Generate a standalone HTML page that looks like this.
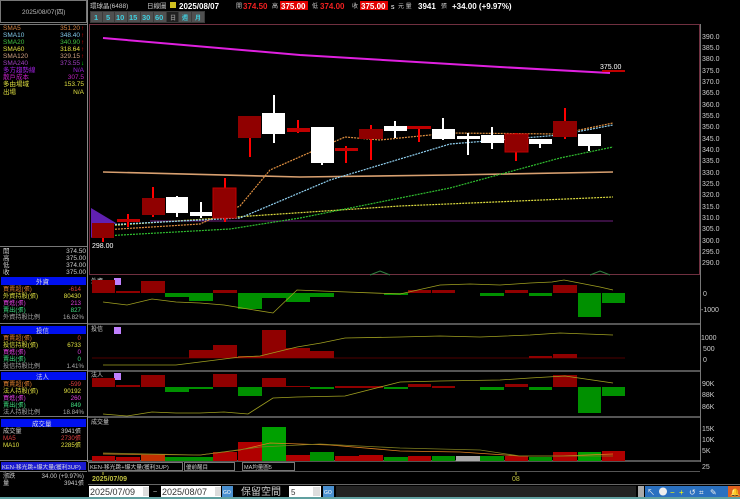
<!DOCTYPE html>
<html><head><meta charset="utf-8"><style>
html,body{margin:0;padding:0;background:#000;width:740px;height:499px;overflow:hidden}
svg text{font-family:"Liberation Sans","Noto Sans CJK TC",sans-serif}
</style></head><body>
<svg width="740" height="499" viewBox="0 0 740 499" xmlns="http://www.w3.org/2000/svg" font-size="7">
<rect width="740" height="499" fill="#000"/>
<rect x="0.5" y="0.5" width="86" height="22" fill="none" stroke="#777"/>
<line x1="87.5" y1="0" x2="87.5" y2="462" stroke="#888"/>
<line x1="0" y1="24.5" x2="87" y2="24.5" stroke="#777"/>
<text x="22" y="14" fill="#bbb" font-size="6.5">2025/08/07(四)</text>
<g font-size="6.5">
<text x="3" y="30" fill="#d08040">SMA5</text><text x="80" y="30" fill="#d08040" text-anchor="end">351.20</text>
<text x="3" y="37" fill="#80c8e8">SMA10</text><text x="80" y="37" fill="#80c8e8" text-anchor="end">348.40</text>
<text x="3" y="44" fill="#40c040">SMA20</text><text x="80" y="44" fill="#40c040" text-anchor="end">340.90</text>
<text x="3" y="51" fill="#e0e040">SMA60</text><text x="80" y="51" fill="#e0e040" text-anchor="end">318.64</text>
<text x="3" y="58" fill="#d0a080">SMA120</text><text x="80" y="58" fill="#d0a080" text-anchor="end">329.15</text>
<text x="3" y="65" fill="#a040c0">SMA240</text><text x="80" y="65" fill="#a040c0" text-anchor="end">373.55</text>
<text x="3" y="72" fill="#a020e0">多方趨勢線</text><text x="84" y="72" fill="#a020e0" text-anchor="end">N/A</text>
<text x="3" y="79" fill="#c020c0">散戶成本</text><text x="84" y="79" fill="#c020c0" text-anchor="end">307.5</text>
<text x="3" y="86" fill="#e0e040">多由場域</text><text x="84" y="86" fill="#e0e040" text-anchor="end">153.75</text>
<text x="3" y="94" fill="#e0e040">出場</text><text x="84" y="94" fill="#e0e040" text-anchor="end">N/A</text>
</g>
<g fill="#f00" font-size="6"><text x="81" y="30">↑</text><text x="81" y="37">↑</text><text x="81" y="44">↑</text><text x="81" y="51">↑</text><text x="81" y="58">↑</text></g>
<text x="81" y="65" fill="#0f0" font-size="6">↓</text>
<line x1="0" y1="246.5" x2="87" y2="246.5" stroke="#777"/>
<g font-size="6.5" fill="#ccc">
<text x="3" y="253">開</text><text x="86" y="253" text-anchor="end">374.50</text>
<text x="3" y="260">高</text><text x="86" y="260" text-anchor="end">375.00</text>
<text x="3" y="267">低</text><text x="86" y="267" text-anchor="end">374.00</text>
<text x="3" y="274">收</text><text x="86" y="274" text-anchor="end">375.00</text>
</g>
<g>
<rect x="1" y="277" width="85" height="8" fill="#0010f0"/><text x="36" y="284" fill="#ddd" font-size="6.5">外資</text>
<rect x="1" y="326" width="85" height="8" fill="#0010f0"/><text x="36" y="333" fill="#ddd" font-size="6.5">投信</text>
<rect x="1" y="372" width="85" height="8" fill="#0010f0"/><text x="36" y="379" fill="#ddd" font-size="6.5">法人</text>
<rect x="1" y="419" width="85" height="8" fill="#0010f0"/><text x="32" y="426" fill="#ddd" font-size="6.5">成交量</text>
<rect x="1" y="462" width="85" height="8" fill="#1a1ad0"/><text x="2" y="469" fill="#ddd" font-size="5.8">KEN-移光跳+爆大量(獲利3UP)</text>
</g>
<g stroke="#777"><line x1="0" y1="323.5" x2="87" y2="323.5"/><line x1="0" y1="370.5" x2="87" y2="370.5"/><line x1="0" y1="416.5" x2="87" y2="416.5"/><line x1="0" y1="460.5" x2="87" y2="460.5"/><line x1="0" y1="471.5" x2="87" y2="471.5"/></g>
<g font-size="6.2">
<text x="3" y="291" fill="#e08030">買賣超(張)</text><text x="81" y="291" fill="#e04040" text-anchor="end">-614</text>
<text x="3" y="298" fill="#e0e040">外資持股(張)</text><text x="81" y="298" fill="#e0e040" text-anchor="end">80430</text>
<text x="3" y="305" fill="#e040e0">買進(張)</text><text x="81" y="305" fill="#e040e0" text-anchor="end">213</text>
<text x="3" y="312" fill="#40e080">賣出(張)</text><text x="81" y="312" fill="#40e080" text-anchor="end">827</text>
<text x="3" y="319" fill="#aaa">外資持股比例</text><text x="84" y="319" fill="#aaa" text-anchor="end">16.82%</text>
<text x="3" y="340" fill="#e08030">買賣超(張)</text><text x="81" y="340" fill="#e04040" text-anchor="end">0</text>
<text x="3" y="347" fill="#e0e040">投信持股(張)</text><text x="81" y="347" fill="#e0e040" text-anchor="end">6733</text>
<text x="3" y="354" fill="#e040e0">買進(張)</text><text x="81" y="354" fill="#e040e0" text-anchor="end">0</text>
<text x="3" y="361" fill="#40e080">賣出(張)</text><text x="81" y="361" fill="#40e080" text-anchor="end">0</text>
<text x="3" y="368" fill="#aaa">投信持股比例</text><text x="84" y="368" fill="#aaa" text-anchor="end">1.41%</text>
<text x="3" y="386" fill="#e08030">買賣超(張)</text><text x="81" y="386" fill="#e04040" text-anchor="end">-599</text>
<text x="3" y="393" fill="#e0e040">法人持股(張)</text><text x="81" y="393" fill="#e0e040" text-anchor="end">90192</text>
<text x="3" y="400" fill="#e040e0">買進(張)</text><text x="81" y="400" fill="#e040e0" text-anchor="end">260</text>
<text x="3" y="407" fill="#40e080">賣出(張)</text><text x="81" y="407" fill="#40e080" text-anchor="end">849</text>
<text x="3" y="414" fill="#aaa">法人持股比例</text><text x="84" y="414" fill="#aaa" text-anchor="end">18.84%</text>
<text x="3" y="433" fill="#ccc">成交量</text><text x="81" y="433" fill="#ccc" text-anchor="end">3941張</text>
<text x="3" y="440" fill="#e04040">MA5</text><text x="81" y="440" fill="#e04040" text-anchor="end">2730張</text>
<text x="3" y="447" fill="#e0e040">MA10</text><text x="81" y="447" fill="#e0e040" text-anchor="end">2285張</text>
<text x="3" y="478" fill="#ccc">漲跌</text><text x="84" y="478" fill="#ccc" text-anchor="end">34.00 (+9.97%)</text>
<text x="3" y="485" fill="#ccc">量</text><text x="84" y="485" fill="#ccc" text-anchor="end">3941張</text>
</g>
<text x="90" y="8" fill="#ccc" font-size="6.5">環球晶(6488)</text>
<text x="147" y="8" fill="#ccc" font-size="6.5">日線圖</text>
<rect x="170" y="2" width="6" height="6" fill="#d0c020"/>
<text x="179" y="9" fill="#fff" font-size="8" font-weight="bold">2025/08/07</text>
<text x="236" y="8" fill="#ccc" font-size="6">開</text><text x="243" y="9" fill="#f02020" font-size="8" font-weight="bold">374.50</text>
<text x="272" y="8" fill="#ccc" font-size="6">高</text><rect x="280" y="1" width="28" height="9" fill="#e00000"/><text x="281" y="9" fill="#fff" font-size="8" font-weight="bold">375.00</text>
<text x="312" y="8" fill="#ccc" font-size="6">低</text><text x="320" y="9" fill="#f02020" font-size="8" font-weight="bold">374.00</text>
<text x="352" y="8" fill="#ccc" font-size="6">收</text><rect x="360" y="1" width="28" height="9" fill="#e00000"/><text x="361" y="9" fill="#fff" font-size="8" font-weight="bold">375.00</text>
<text x="391" y="9" fill="#fff" font-size="7">s</text><text x="398" y="8" fill="#ccc" font-size="6">元 量</text>
<text x="418" y="9" fill="#fff" font-size="8" font-weight="bold">3941</text><text x="441" y="8" fill="#ccc" font-size="6">張</text>
<text x="452" y="9" fill="#fff" font-size="8" font-weight="bold">+34.00 (+9.97%)</text>
<rect x="90" y="11" width="115" height="12" fill="#3a3a3a"/>
<g font-size="7.5" fill="#40d0e0" font-weight="bold">
<rect x="91" y="12" width="11" height="10" fill="#505050"/><text x="94" y="20">1</text>
<rect x="103" y="12" width="11" height="10" fill="#505050"/><text x="106" y="20">5</text>
<rect x="115" y="12" width="12" height="10" fill="#505050"/><text x="116" y="20">10</text>
<rect x="128" y="12" width="12" height="10" fill="#505050"/><text x="129" y="20">15</text>
<rect x="141" y="12" width="12" height="10" fill="#505050"/><text x="142" y="20">30</text>
<rect x="154" y="12" width="12" height="10" fill="#505050"/><text x="155" y="20">60</text>
<rect x="167" y="12" width="11" height="10" fill="#202020"/><text x="170" y="20" font-size="6" fill="#888">日</text>
<rect x="179" y="12" width="12" height="10" fill="#505050"/><text x="182" y="20" font-size="6">週</text>
<rect x="192" y="12" width="12" height="10" fill="#505050"/><text x="195" y="20" font-size="6">月</text>
</g>
<rect x="89.5" y="24.5" width="610" height="250" fill="none" stroke="#703040"/>
<line x1="700.5" y1="24" x2="700.5" y2="462" stroke="#777"/>
<g fill="#ccc" font-size="7">
<text x="702" y="39">390.0</text><text x="702" y="50">385.0</text><text x="702" y="61">380.0</text><text x="702" y="73">375.0</text>
<text x="702" y="84">370.0</text><text x="702" y="95">365.0</text><text x="702" y="107">360.0</text><text x="702" y="118">355.0</text>
<text x="702" y="129">350.0</text><text x="702" y="141">345.0</text><text x="702" y="152">340.0</text><text x="702" y="163">335.0</text>
<text x="702" y="175">330.0</text><text x="702" y="186">325.0</text><text x="702" y="197">320.0</text><text x="702" y="209">315.0</text>
<text x="702" y="220">310.0</text><text x="702" y="231">305.0</text><text x="702" y="243">300.0</text><text x="702" y="254">295.0</text>
<text x="702" y="265">290.0</text>
</g>
<polyline points="103,38 300,55 500,67 610,73" fill="none" stroke="#e020e0" stroke-width="2"/>
<polyline points="103,172 300,177 450,175 613,172" fill="none" stroke="#d8a070" stroke-width="1.6"/>
<line x1="150" y1="221" x2="613" y2="221" stroke="#702080" stroke-width="1"/>
<polygon points="91,208 116,223 91,238" fill="#6020b0"/>
<polyline points="103,226 250,216 400,206 613,197" fill="none" stroke="#e0e040" stroke-width="1.2" stroke-dasharray="2,1"/>
<polyline points="103,236 230,229 300,218 450,188 560,158 613,147" fill="none" stroke="#30c030" stroke-width="1.2" stroke-dasharray="2,1"/>
<polyline points="103,225 240,218 330,180 450,144 560,135 613,125" fill="none" stroke="#90d0f0" stroke-width="1.2" stroke-dasharray="2,1"/>
<polyline points="103,230 200,224 240,206 270,170 345,137 380,140 450,133 560,134 613,123" fill="none" stroke="#e09040" stroke-width="1.2" stroke-dasharray="2,1"/>
<g>
<rect x="102" y="223" width="2" height="19" fill="#f00"/><rect x="92" y="223" width="22" height="15" fill="#900000"/>
<rect x="127" y="214" width="2" height="13" fill="#f00"/><rect x="117" y="219" width="23" height="3" fill="#c00000"/>
<rect x="152" y="187" width="2" height="30" fill="#f00"/><rect x="142" y="198" width="23" height="17" fill="#900000"/>
<rect x="176" y="196" width="2" height="21" fill="#fff"/><rect x="166" y="197" width="22" height="16" fill="#fff"/>
<rect x="200" y="202" width="2" height="16" fill="#fff"/><rect x="190" y="212" width="22" height="4" fill="#fff"/>
<rect x="224" y="178" width="2" height="44" fill="#f00"/><rect x="213" y="188" width="23" height="30" fill="#900000" stroke="#c00000"/>
<rect x="249" y="116" width="2" height="41" fill="#f00"/><rect x="238" y="116" width="23" height="22" fill="#900000"/>
<rect x="273" y="95" width="2" height="48" fill="#fff"/><rect x="262" y="113" width="23" height="21" fill="#fff"/>
<rect x="297" y="120" width="2" height="13" fill="#f00"/><rect x="287" y="128" width="23" height="4" fill="#c00000"/>
<rect x="321" y="127" width="2" height="38" fill="#fff"/><rect x="311" y="127" width="23" height="36" fill="#fff"/>
<rect x="345" y="146" width="2" height="17" fill="#f00"/><rect x="335" y="148" width="23" height="3" fill="#c00000"/>
<rect x="370" y="125" width="2" height="35" fill="#f00"/><rect x="359" y="129" width="24" height="10" fill="#900000"/>
<rect x="394" y="121" width="2" height="17" fill="#fff"/><rect x="384" y="126" width="23" height="5" fill="#fff"/>
<rect x="418" y="126" width="2" height="16" fill="#f00"/><rect x="407" y="126" width="24" height="3" fill="#c00000"/>
<rect x="442" y="118" width="2" height="22" fill="#fff"/><rect x="432" y="129" width="23" height="10" fill="#fff"/>
<rect x="467" y="133" width="2" height="22" fill="#fff"/><rect x="457" y="136" width="23" height="3" fill="#fff"/>
<rect x="491" y="127" width="2" height="22" fill="#fff"/><rect x="481" y="135" width="23" height="8" fill="#fff"/>
<rect x="515" y="133" width="2" height="28" fill="#f00"/><rect x="505" y="134" width="23" height="18" fill="#900000" stroke="#c00000"/>
<rect x="539" y="139" width="2" height="9" fill="#fff"/><rect x="529" y="139" width="23" height="5" fill="#fff"/>
<rect x="564" y="108" width="2" height="31" fill="#f00"/><rect x="553" y="121" width="24" height="16" fill="#900000"/>
<rect x="588" y="134" width="2" height="17" fill="#fff"/><rect x="578" y="134" width="23" height="12" fill="#fff"/>
<rect x="602" y="70" width="23" height="2" fill="#c00000"/>
</g>
<text x="600" y="69" fill="#fff" font-size="7">375.00</text>
<text x="92" y="248" fill="#fff" font-size="7">298.00</text>
<polyline points="370,275 380,271 390,275" fill="none" stroke="#308040"/>
<polyline points="590,275 600,271 610,275" fill="none" stroke="#308040"/>
<g stroke="#888" stroke-width="1.2"><line x1="88" y1="324" x2="700" y2="324"/><line x1="88" y1="371" x2="700" y2="371"/><line x1="88" y1="417" x2="700" y2="417"/><line x1="88" y1="461" x2="700" y2="461"/></g>
<g font-size="6" fill="#ccc"><text x="91" y="283">外資</text><text x="91" y="331">投信</text><text x="91" y="377">法人</text><text x="91" y="424">成交量</text></g>
<g fill="#c080ff"><rect x="114" y="278" width="7" height="7"/><rect x="114" y="327" width="7" height="7"/><rect x="114" y="373" width="7" height="7"/></g>
<g>
<rect x="92" y="280" width="23" height="13" fill="#900000"/><rect x="116" y="291" width="24" height="2" fill="#900000"/>
<rect x="141" y="281" width="24" height="12" fill="#900000"/><rect x="165" y="293" width="24" height="4" fill="#009000"/>
<rect x="189" y="293" width="24" height="8" fill="#009000"/><rect x="213" y="290" width="24" height="3" fill="#900000"/>
<rect x="238" y="293" width="24" height="16" fill="#009000"/><rect x="262" y="293" width="24" height="5" fill="#009000"/>
<rect x="286" y="293" width="24" height="9" fill="#009000"/><rect x="310" y="293" width="24" height="4" fill="#009000"/>
<rect x="384" y="293" width="24" height="2" fill="#009000"/>
<rect x="408" y="290" width="23" height="3" fill="#900000"/><rect x="432" y="290" width="23" height="3" fill="#900000"/>
<rect x="480" y="293" width="24" height="3" fill="#009000"/><rect x="505" y="290" width="23" height="3" fill="#900000"/>
<rect x="529" y="293" width="23" height="3" fill="#009000"/><rect x="553" y="285" width="24" height="8" fill="#900000"/>
<rect x="578" y="293" width="23" height="24" fill="#009000"/><rect x="602" y="293" width="23" height="10" fill="#009000"/>
<polyline points="103,302 127,305 152,299 176,302 200,303 224,305 248,309 273,313 297,290 321,291 400,294 440,285 470,284 500,285 530,283 552,282 564,280 600,287 613,290" fill="none" stroke="#a0a020" stroke-width="0.8"/>
</g>
<g>
<line x1="92" y1="358" x2="625" y2="358" stroke="#500000"/>
<rect x="189" y="350" width="24" height="8" fill="#900000"/><rect x="213" y="345" width="24" height="13" fill="#900000"/>
<rect x="238" y="356" width="24" height="2" fill="#900000"/><rect x="262" y="330" width="24" height="28" fill="#900000"/>
<rect x="286" y="348" width="24" height="10" fill="#900000"/><rect x="310" y="351" width="24" height="7" fill="#900000"/>
<rect x="529" y="356" width="23" height="2" fill="#900000"/><rect x="553" y="354" width="24" height="4" fill="#900000"/>
<polyline points="103,365 176,365 200,362 240,357 260,356 297,347 321,343 345,338 400,337 440,336 480,337 530,335 560,333 613,335" fill="none" stroke="#a0a020" stroke-width="0.8"/>
</g>
<g>
<rect x="92" y="378" width="23" height="9" fill="#900000"/><rect x="116" y="385" width="24" height="2" fill="#900000"/>
<rect x="141" y="375" width="24" height="12" fill="#900000"/><rect x="165" y="387" width="24" height="5" fill="#009000"/>
<rect x="189" y="387" width="24" height="2" fill="#009000"/><rect x="213" y="374" width="24" height="13" fill="#900000"/>
<rect x="238" y="387" width="24" height="9" fill="#009000"/><rect x="262" y="378" width="24" height="9" fill="#900000"/>
<rect x="286" y="386" width="24" height="1" fill="#900000"/><rect x="310" y="387" width="24" height="2" fill="#009000"/>
<rect x="335" y="386" width="24" height="2" fill="#900000"/><rect x="359" y="386" width="24" height="2" fill="#900000"/><rect x="384" y="387" width="24" height="2" fill="#009000"/>
<rect x="408" y="384" width="23" height="3" fill="#900000"/><rect x="432" y="386" width="23" height="2" fill="#900000"/>
<rect x="480" y="387" width="24" height="3" fill="#009000"/><rect x="505" y="384" width="23" height="3" fill="#900000"/>
<rect x="529" y="387" width="23" height="3" fill="#009000"/><rect x="553" y="375" width="24" height="12" fill="#900000"/>
<rect x="578" y="387" width="23" height="26" fill="#009000"/><rect x="602" y="387" width="23" height="9" fill="#009000"/>
<polyline points="103,414 127,416 152,412 176,413 200,413 224,412 248,414 273,398 297,397 345,396 400,382 440,381 500,380 530,378 565,376 613,383" fill="none" stroke="#a0a020" stroke-width="0.8"/>
</g>
<g>
<rect x="92" y="456" width="23" height="5" fill="#b00000"/><rect x="116" y="457" width="24" height="4" fill="#b00000"/>
<rect x="141" y="455" width="24" height="6" fill="#c03000"/><rect x="165" y="457" width="24" height="4" fill="#009000"/>
<rect x="189" y="457" width="24" height="4" fill="#009000"/><rect x="213" y="452" width="24" height="9" fill="#b00000"/>
<rect x="238" y="442" width="24" height="19" fill="#b00000"/><rect x="262" y="427" width="24" height="34" fill="#00a000"/>
<rect x="286" y="455" width="24" height="6" fill="#b00000"/><rect x="310" y="452" width="24" height="9" fill="#009000"/>
<rect x="335" y="456" width="24" height="5" fill="#b00000"/><rect x="359" y="455" width="24" height="6" fill="#b00000"/>
<rect x="384" y="457" width="24" height="4" fill="#009000"/><rect x="408" y="456" width="23" height="5" fill="#b00000"/>
<rect x="432" y="456" width="23" height="5" fill="#009000"/><rect x="456" y="456" width="24" height="5" fill="#aaa"/>
<rect x="480" y="456" width="24" height="5" fill="#009000"/><rect x="505" y="456" width="23" height="5" fill="#b00000"/>
<rect x="529" y="457" width="23" height="4" fill="#009000"/><rect x="553" y="452" width="24" height="9" fill="#b00000"/>
<rect x="578" y="452" width="23" height="9" fill="#00a000"/><rect x="602" y="451" width="23" height="10" fill="#b00000"/>
<polyline points="103,454 200,455 240,450 270,443 330,445 400,451 460,452 520,456 560,456 613,454" fill="none" stroke="#e08020" stroke-width="0.8"/>
<polyline points="103,453 200,455 260,447 320,444 400,448 480,450 520,456 613,456" fill="none" stroke="#808020" stroke-width="0.8"/>
</g>
<g fill="#ccc" font-size="7">
<text x="703" y="296">0</text><text x="701" y="312">-1000</text>
<text x="701" y="340">1000</text><text x="703" y="351">500</text><text x="703" y="362">0</text>
<text x="702" y="386">90K</text><text x="702" y="397">88K</text><text x="702" y="409">86K</text>
<text x="702" y="431">15K</text><text x="702" y="442">10K</text><text x="702" y="453">5K</text><text x="702" y="469">25</text>
</g>
<rect x="88.5" y="462.5" width="94" height="8" fill="#000" stroke="#777"/>
<text x="90" y="469" fill="#ccc" font-size="5.8">KEN-移光跳+爆大量(獲利3UP)</text>
<rect x="184.5" y="462.5" width="50" height="8" fill="#000" stroke="#777"/><text x="186" y="469" fill="#ccc" font-size="5.5">優前醒目</text>
<rect x="242.5" y="462.5" width="52" height="8" fill="#000" stroke="#777"/><text x="244" y="469" fill="#ccc" font-size="5.5">MA均量圖5</text>
<line x1="88" y1="471.5" x2="700" y2="471.5" stroke="#555"/>
<line x1="103" y1="472" x2="103" y2="475" stroke="#c0c040"/>
<text x="92" y="481" fill="#c0c040" font-size="7" font-weight="bold">2025/07/09</text>
<line x1="516" y1="472" x2="516" y2="475" stroke="#c0c040"/><text x="512" y="481" fill="#c0c040" font-size="7">08</text>
<line x1="88" y1="484.5" x2="740" y2="484.5" stroke="#666"/>
<rect x="89" y="486" width="60" height="11" fill="#fff"/><text x="90" y="495" fill="#333" font-size="9">2025/07/09</text>
<rect x="143" y="487" width="6" height="9" fill="#ddd"/>
<text x="153" y="494" fill="#ccc" font-size="7">~</text>
<rect x="161" y="486" width="60" height="11" fill="#fff"/><text x="162" y="495" fill="#333" font-size="9">2025/08/07</text>
<rect x="215" y="487" width="6" height="9" fill="#ddd"/>
<rect x="222" y="486" width="11" height="11" fill="#4a90d0"/><text x="223" y="494" fill="#fff" font-size="5">GO</text>
<text x="241" y="495" fill="#ccc" font-size="10">保留空間</text>
<rect x="289" y="486" width="32" height="11" fill="#fff"/><text x="291" y="495" fill="#333" font-size="8">5</text>
<rect x="313" y="487" width="7" height="9" fill="#ddd"/>
<rect x="323" y="486" width="11" height="11" fill="#4a90d0"/><text x="324" y="494" fill="#fff" font-size="5">GO</text>
<rect x="336" y="486" width="300" height="11" fill="#222"/>
<rect x="638" y="486" width="6" height="11" fill="#aaa"/>
<rect x="645" y="486" width="95" height="11" fill="#2a70c0"/>
<g fill="#eee" font-size="8"><text x="647" y="495">↖</text><circle cx="663" cy="491.5" r="4"/><text x="670" y="495" fill="#ff0">−</text><text x="679" y="495" fill="#ff0">+</text><text x="689" y="495">↺</text><text x="699" y="495">⌗</text><text x="710" y="495">✎</text></g>
<rect x="728" y="486" width="12" height="11" fill="#e06020"/><text x="730" y="495" fill="#ff0" font-size="8">🔔</text>
<rect x="0" y="497" width="740" height="2" fill="#60a0a0"/>
</svg>
</body></html>
